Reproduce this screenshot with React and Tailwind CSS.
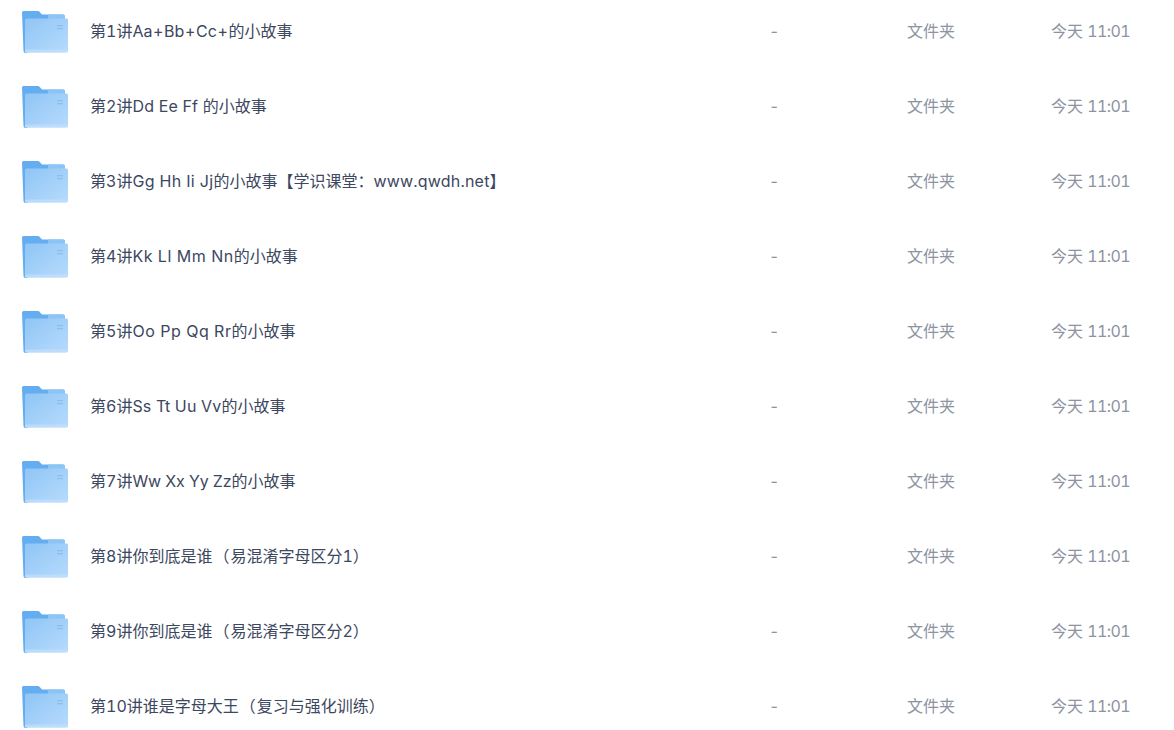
const Plus = () => <span className="px-[0.67px]">+</span>;
const Paren = () => <span className="px-[1px]">（</span>;

const rows = [
  <>第1讲Aa<Plus />Bb<Plus />Cc<Plus />的小故事</>,
  <>第2讲<span className="tracking-[0.2px]">Dd Ee Ff </span>的小故事</>,
  <>第3讲<span className="tracking-[0.35px]">Gg Hh Ii Jj</span>的小故事【学识课堂：<span className="tracking-[0.2px]">www.qwdh.net</span>】</>,
  <>第4讲<span className="tracking-[0.55px]">Kk Ll Mm Nn</span>的小故事</>,
  <>第5讲<span className="tracking-[0.55px]">Oo Pp Qq Rr</span>的小故事</>,
  <>第6讲<span className="tracking-[0.2px]">Ss Tt Uu Vv</span>的小故事</>,
  <>第7讲<span className="tracking-[-0.1px]">Ww Xx Yy Zz</span>的小故事</>,
  <>第8讲你到底是谁<Paren />易混淆字母区分1）</>,
  <>第9讲你到底是谁<Paren />易混淆字母区分2）</>,
  <>第10讲谁是字母大王<Paren />复习与强化训练）</>,
];

function Folder({ id }) {
  return (
    <svg width="46" height="44" viewBox="0 0 46 44" className="mt-[2px] shrink-0">
      <defs>
        <linearGradient id={id} x1="0" y1="0" x2="1" y2="1">
          <stop offset="0" stopColor="#90c5f5" />
          <stop offset="1" stopColor="#b6dbfd" />
        </linearGradient>
      </defs>
      <path d="M0 2.5a1.5 1.5 0 0 1 1.5-1.5h14.5a2 2 0 0 1 1.5.7l2 2.3a2 2 0 0 0 1.5.6h20a1.5 1.5 0 0 1 1.5 1.5v5h-37v32h-2a2 2 0 0 1-2-2z" fill="#64adf0" />
      <path d="M26 4.6h15.5a1.5 1.5 0 0 1 1.5 1.5v4h-17z" fill="#8cc4f5" />
      <path d="M3 10a1.5 1.5 0 0 1 1.5-1.5h40a1.5 1.5 0 0 1 1.5 1.5v30.5a2 2 0 0 1-2 2h-41z" fill={`url(#${id})`} />
      <rect x="3" y="39.5" width="43" height="3" rx="1.5" fill="#c3e0fb" opacity="0.7" />
      <rect x="35" y="15" width="6" height="1.3" fill="#8cbfee" />
      <rect x="35" y="18" width="6" height="1.3" fill="#8cbfee" />
    </svg>
  );
}

export default function App() {
  return (
    <div
      className="-mt-[7px] h-[737px] overflow-hidden bg-white text-[16px] tabular-nums"
      style={{ fontFamily: 'Inter, "Noto Sans CJK SC", sans-serif' }}
    >
      {rows.map((name, i) => (
        <div key={i} className="flex h-[75px] items-center pl-[22px]">
          <Folder id={`folder-${i}`} />
          <div className="ml-[22px] w-[679px] truncate text-[#3c4760]">{name}</div>
          <div className="w-[138px] text-[#8d93a1]">-</div>
          <div className="w-[144px] text-[#8d93a1]">文件夹</div>
          <div className="text-[#8d93a1]">今天 <span className="tracking-[-0.6px]">11:01</span></div>
        </div>
      ))}
    </div>
  );
}
